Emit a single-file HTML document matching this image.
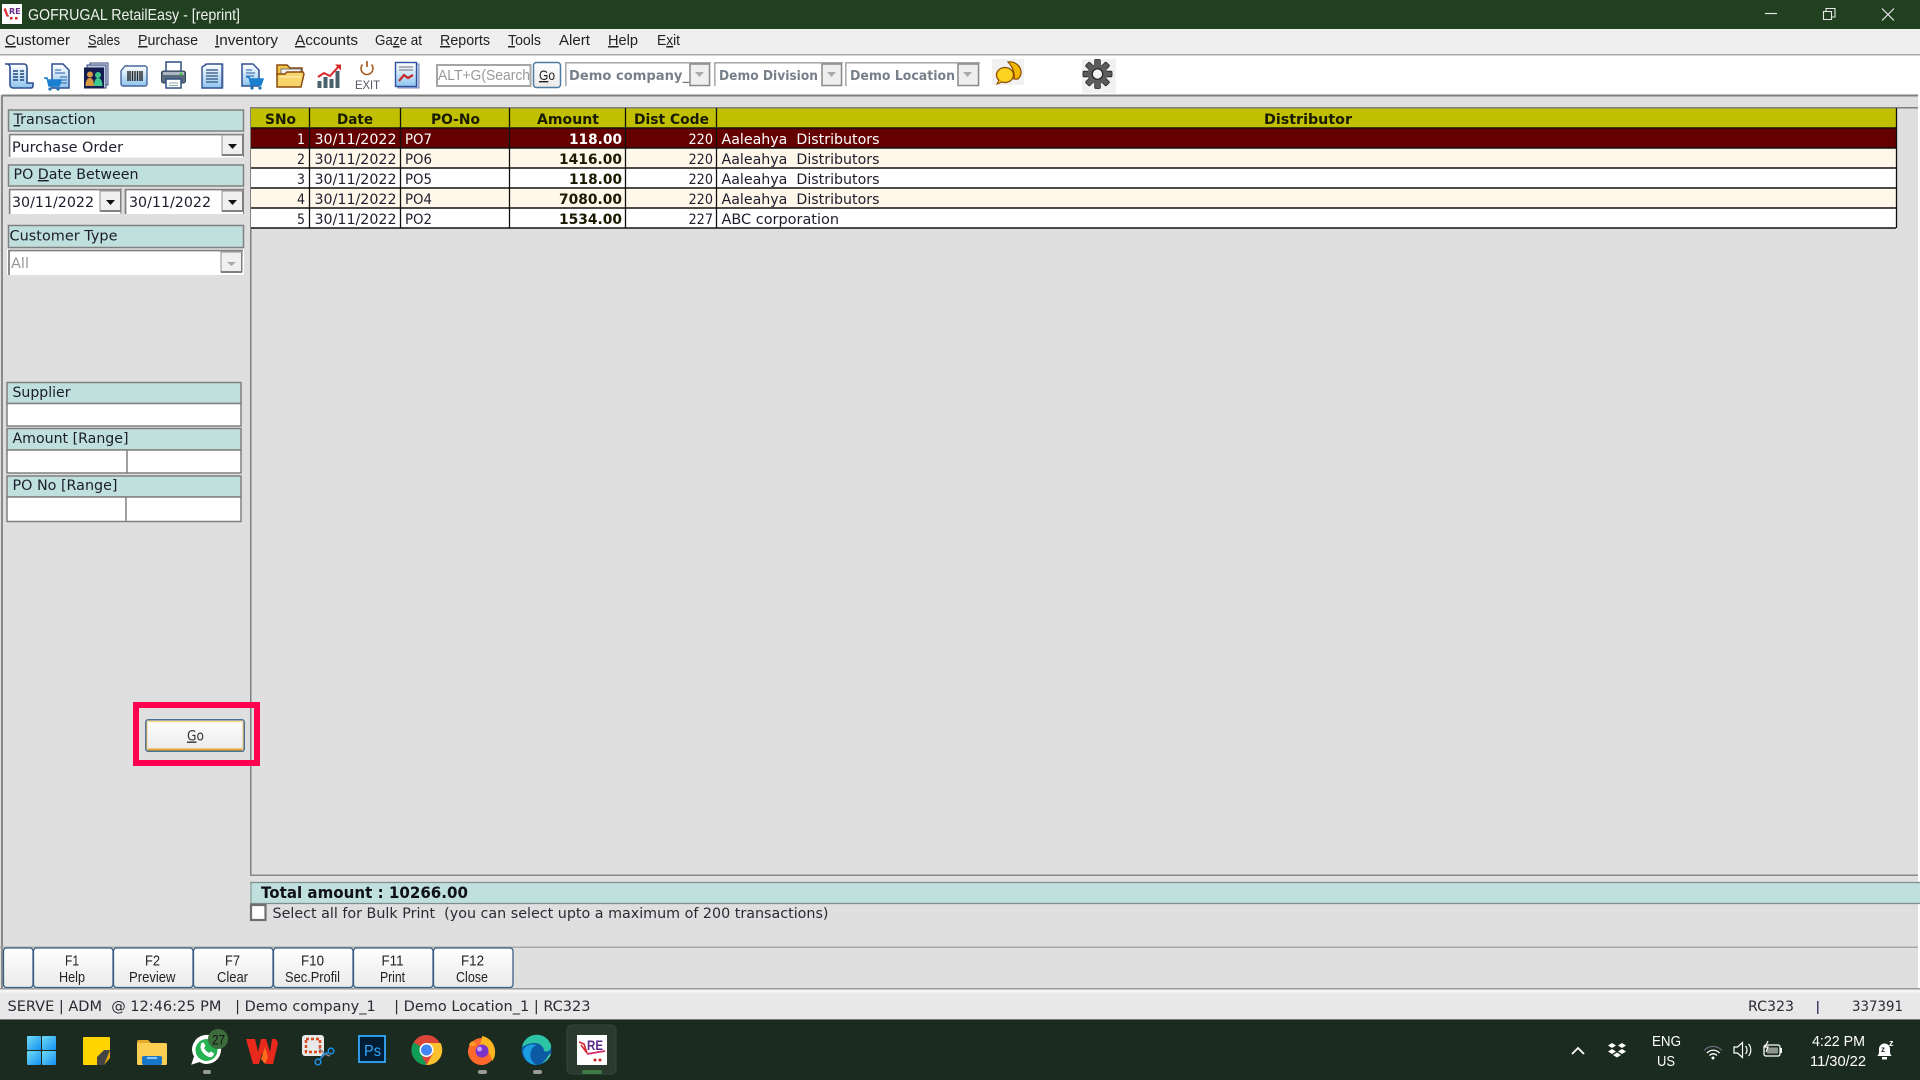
<!DOCTYPE html>
<html><head><meta charset="utf-8"><title>GOFRUGAL RetailEasy - [reprint]</title>
<style>
html,body{margin:0;padding:0;width:1920px;height:1080px;overflow:hidden;background:#dfdfdf}
svg{display:block;position:absolute;left:0;top:0}
text{white-space:pre;font-family:"DejaVu Sans","Liberation Sans",sans-serif;font-size:14px;fill:#1c1c2c}
.m{font-family:"Liberation Sans",sans-serif;font-size:15px;fill:#222}
.b{font-weight:bold;fill:#1a1a00}
.w{fill:#fff}
.f{font-family:"Liberation Sans",sans-serif;font-size:15px;fill:#222}
.t{font-family:"Liberation Sans",sans-serif;font-size:15px;fill:#fff}
.g{font-weight:bold;fill:#77808a;font-size:13.5px}
</style></head><body>
<svg width="1920" height="1080" viewBox="0 0 1920 1080" xmlns="http://www.w3.org/2000/svg">
<defs>
<linearGradient id="btn" x1="0" y1="0" x2="0" y2="1"><stop offset="0" stop-color="#fff"/><stop offset="1" stop-color="#eaeaea"/></linearGradient>
<linearGradient id="blu" x1="0" y1="0" x2="0" y2="1"><stop offset="0" stop-color="#fff"/><stop offset="1" stop-color="#8fc4ee"/></linearGradient>
<linearGradient id="win" x1="0" y1="0" x2="1" y2="1"><stop offset="0" stop-color="#6fdcf7"/><stop offset="1" stop-color="#1590f0"/></linearGradient>
<g id="cart"><path d="M-9 -4h3l2 8h10l2-6h-13" fill="#1a7fd0" stroke="#1a7fd0" stroke-width="1.5"/><rect x="-5" y="-2" width="11" height="6" fill="#1a7fd0"/><circle cx="-3" cy="7" r="1.6" fill="#1a6fb0"/><circle cx="5" cy="7" r="1.6" fill="#1a6fb0"/></g>
<g id="arr"><rect x="0" y="0" width="21" height="20" fill="#f0f0f0" stroke="#909090"/><rect x="20" y="0" width="1.5" height="20" fill="#808080"/><rect x="0" y="19" width="21" height="2" fill="#808080"/></g>
</defs>

<!-- title bar -->
<rect width="1920" height="29" fill="#20401f"/>
<rect x="2" y="4" width="20" height="20" fill="#fff"/>
<path d="M4 9l3 7 2 0 M5 8l3 8" stroke="#d33" stroke-width="1.2" fill="none"/>
<text x="9" y="14" font-size="8" style="font-size:8px;font-weight:bold;fill:#6a2a8a">RE</text>
<rect x="10" y="17" width="2.5" height="2.5" fill="#d22"/><rect x="15" y="17" width="2.5" height="2.5" fill="#d22"/>
<text class="t" x="28" y="20" textLength="212" lengthAdjust="spacingAndGlyphs" style="font-size:16px;fill:#f0f0f0">GOFRUGAL RetailEasy - [reprint]</text>
<path d="M1765 13.5h12" stroke="#e8e8e8" stroke-width="1.2"/>
<path d="M1823.5 11.5h8v8h-8z M1826 11v-2.5h9v8.5h-3" fill="none" stroke="#e8e8e8" stroke-width="1.1"/>
<path d="M1882 8.5l12 12M1894 8.5l-12 12" stroke="#e8e8e8" stroke-width="1.2"/>

<!-- menu bar -->
<rect y="29" width="1920" height="25" fill="#efefef"/>
<rect y="54" width="1920" height="1.5" fill="#a8a8a8"/>
<rect y="55.5" width="1920" height="39.5" fill="#fff"/>
<text class="m" x="5" y="45" textLength="65" lengthAdjust="spacingAndGlyphs"><tspan text-decoration="underline">C</tspan>ustomer</text>
<text class="m" x="88" y="45" textLength="32" lengthAdjust="spacingAndGlyphs"><tspan text-decoration="underline">S</tspan>ales</text>
<text class="m" x="138" y="45" textLength="60" lengthAdjust="spacingAndGlyphs"><tspan text-decoration="underline">P</tspan>urchase</text>
<text class="m" x="215" y="45" textLength="63" lengthAdjust="spacingAndGlyphs"><tspan text-decoration="underline">I</tspan>nventory</text>
<text class="m" x="295" y="45" textLength="63" lengthAdjust="spacingAndGlyphs"><tspan text-decoration="underline">A</tspan>ccounts</text>
<text class="m" x="375" y="45" textLength="47" lengthAdjust="spacingAndGlyphs">Ga<tspan text-decoration="underline">z</tspan>e at</text>
<text class="m" x="440" y="45" textLength="50" lengthAdjust="spacingAndGlyphs"><tspan text-decoration="underline">R</tspan>eports</text>
<text class="m" x="508" y="45" textLength="33" lengthAdjust="spacingAndGlyphs"><tspan text-decoration="underline">T</tspan>ools</text>
<text class="m" x="559" y="45" textLength="31" lengthAdjust="spacingAndGlyphs">Alert</text>
<text class="m" x="608" y="45" textLength="30" lengthAdjust="spacingAndGlyphs"><tspan text-decoration="underline">H</tspan>elp</text>
<text class="m" x="657" y="45" textLength="23" lengthAdjust="spacingAndGlyphs">E<tspan text-decoration="underline">x</tspan>it</text>

<!-- toolbar icons -->
<g transform="translate(3,62)">
<path d="M2 2h19a3 3 0 0 1 3 3v16h6v3a2 2 0 0 1-2 2H10a3 3 0 0 1-3-3V5a3 3 0 0 0-3-3z" fill="url(#blu)" stroke="#2f4f8f" stroke-width="1.6"/>
<path d="M10 9h5M17 9h4M10 12h5M17 12h4M10 15h5M17 15h4M10 18h5M17 18h4" stroke="#23467f" stroke-width="1.6"/></g>
<g transform="translate(44,62)">
<path d="M8 2h11l6 6v18H8z" fill="url(#blu)" stroke="#2f4f8f" stroke-width="1.5"/><path d="M11 8h6M11 11h10M16 15h7M16 18h7M16 21h7" stroke="#4a78b5" stroke-width="1.3"/>
<use href="#cart" transform="translate(9,20)"/></g>
<g transform="translate(83,62)">
<rect x="7" y="1" width="18" height="22" fill="#dfe6ef" stroke="#3a4a80"/><rect x="4" y="3" width="19" height="23" fill="#bcc8dc" stroke="#3a4a80"/><rect x="1" y="5.500" width="20" height="21" fill="#141c50"/>
<circle cx="7" cy="12.500" r="3" fill="#d99a44"/><path d="M2.500 24c0-6 2-8 4.500-8s4 3 4 8z" fill="#d99a44"/><circle cx="15" cy="13" r="3" fill="#3fc88f"/><path d="M11 24c0-6 2-8 4-8s4.500 2 4.500 8z" fill="#3fc88f"/></g>
<g transform="translate(119,62)">
<path d="M6 4h20a2 2 0 0 1 2 2v16a2 2 0 0 1-2 2H4a2 2 0 0 1-2-2V9z" fill="url(#blu)" stroke="#45669c" stroke-width="1.4"/>
<path d="M9 9v10M11 9v10M13.500 9v10M16 9v10M18.500 9v10M21 9v10M23 9v10" stroke="#222" stroke-width="1.400"/></g>
<g transform="translate(160,61)">
<rect x="6" y="1" width="15" height="10" fill="#fff" stroke="#2f4f7f" stroke-width="1.500"/><rect x="1.500" y="10" width="24" height="12" rx="2" fill="#5b6b7d" stroke="#30445f"/><rect x="3" y="11" width="21" height="3" fill="#aab6c2"/><circle cx="21" cy="13" r="1.300" fill="#3c3"/><rect x="6" y="18" width="15" height="9" fill="#fff" stroke="#2f4f7f" stroke-width="1.500"/><path d="M9 22h9M9 24.500h9" stroke="#8aa"/></g>
<g transform="translate(200,62)">
<rect x="5" y="2" width="18" height="24" fill="#cfe0f2" stroke="#7f93b7"/><path d="M2 5l5-3h15v24H2z" fill="url(#blu)" stroke="#2f4f8f" stroke-width="1.400"/><path d="M6 8h12M6 11h12M6 14h12M6 17h12M6 20h12" stroke="#30507f" stroke-width="1.300"/></g>
<g transform="translate(238,62)">
<path d="M4 2h11l6 6v16H4z" fill="url(#blu)" stroke="#2f4f8f" stroke-width="1.500"/><path d="M8 8h6M8 11h9M8 14h8" stroke="#4a78b5" stroke-width="1.300"/>
<use href="#cart" transform="translate(17,19)"/></g>
<g transform="translate(276,63)">
<path d="M1 2h10l3 3h12v7H1z" fill="#f3c648" stroke="#8a4a10" stroke-width="1.500"/><rect x="5" y="6" width="20" height="10" fill="#f4f4f4" stroke="#777"/><path d="M1 24V11h8l2-2h16l1 2-3 13z" fill="#f7d56a" stroke="#8a4a10" stroke-width="1.500"/><path d="M4 14h21" stroke="#fff3c0"/></g>
<g transform="translate(316,62)">
<path d="M1.500 26v-7h4v7zM7.500 26v-11h4v11zM13.500 26v-9h4v9zM19.500 26V9h4v17z" fill="#47606a"/><path d="M2 15l6-4 6 3 9-10" fill="none" stroke="#d8282a" stroke-width="2"/><path d="M19 2.500h6v6z" fill="#d8282a"/></g>
<g transform="translate(367,70)"><path d="M-4.500 -5.500a6 6 0 1 0 9 0" fill="none" stroke="#a85a20" stroke-width="1.500"/><path d="M0 -9v6" stroke="#a85a20" stroke-width="1.700"/></g>
<text x="355" y="89" textLength="25" lengthAdjust="spacingAndGlyphs" style="font-family:'Liberation Sans',sans-serif;font-size:11.500px;fill:#556">EXIT</text>
<g transform="translate(394,62)">
<rect x="4" y="2" width="21" height="24" fill="#c8d4ee" stroke="#7886b8"/><rect x="1.500" y="0.500" width="21" height="24" fill="url(#blu)" stroke="#2d4fa0" stroke-width="1.400"/><path d="M5 5h14M5 8h14" stroke="#8a8a8a" stroke-width="1.300"/><path d="M5 19l5-6 4 3 5-3" fill="none" stroke="#c8282a" stroke-width="2.200"/></g>

<!-- search -->
<rect x="437" y="65" width="93.500" height="21" fill="#fff" stroke="#a5a5a5" stroke-width="2"/>
<text x="438" y="80" textLength="92" lengthAdjust="spacingAndGlyphs" style="font-family:'Liberation Sans',sans-serif;font-size:15px;fill:#999">ALT+G(Search</text>
<rect x="533.500" y="62.500" width="27" height="25" rx="3" fill="url(#btn)" stroke="#4f7a9f" stroke-width="1.500"/>
<text x="539" y="80" textLength="16" lengthAdjust="spacingAndGlyphs" class="m" style="font-size:14px"><tspan text-decoration="underline">G</tspan>o</text>
<!-- combos -->
<g fill="#f4f4f4">
<rect x="565" y="62" width="146" height="24.500"/><rect x="714" y="62" width="129" height="24.500"/><rect x="845" y="62" width="135" height="24.500"/></g>
<path d="M565.800 86V62.800H711M714.800 86V62.800H843M845.800 86V62.800H980" fill="none" stroke="#a8a8a8" stroke-width="1.500"/>
<rect x="567" y="64" width="122" height="22" fill="#fff"/><rect x="716" y="64" width="105" height="22" fill="#fff"/><rect x="847" y="64" width="110" height="22" fill="#fff"/>
<text class="g" x="569" y="80" textLength="120" lengthAdjust="spacingAndGlyphs">Demo company_</text>
<text class="g" x="719" y="80" textLength="99" lengthAdjust="spacingAndGlyphs">Demo Division</text>
<text class="g" x="850" y="80" textLength="105" lengthAdjust="spacingAndGlyphs">Demo Location</text>
<g fill="#efefef" stroke="#8a8a8a" stroke-width="1.500"><rect x="690" y="64" width="19.500" height="21.500"/><rect x="822" y="64" width="19.500" height="21.500"/><rect x="958" y="64" width="20.500" height="21.500"/></g>
<path d="M695 72h9l-4.500 5zM827 72h9l-4.500 5zM963 72h9l-4.500 5z" fill="#aaa"/>
<!-- chat -->
<rect x="992" y="59" width="32" height="26" fill="#f1f1f1"/>
<path d="M1008 62c6-1 12 3 13 9 .5 3-1 6-3 8l-4 0c1-5-1-12-6-17z" fill="#f5b800" stroke="#8a4a00" stroke-width="1.200"/>
<ellipse cx="1005" cy="75" rx="8.500" ry="7.500" fill="#fcd220" stroke="#8a4a00" stroke-width="1.300"/><path d="M999 80l-2 4 5-2" fill="#fcd220" stroke="#8a4a00"/>
<!-- gear -->
<rect x="1082" y="59" width="34" height="34" fill="#f1f1f1"/>
<g transform="translate(1097.500,74)" fill="#5c5c5c" stroke="#222" stroke-width=".8">
<rect x="-2.800" y="-14.500" width="5.600" height="29" rx="1"/><rect x="-2.800" y="-14.500" width="5.600" height="29" rx="1" transform="rotate(45)"/><rect x="-2.800" y="-14.500" width="5.600" height="29" rx="1" transform="rotate(90)"/><rect x="-2.800" y="-14.500" width="5.600" height="29" rx="1" transform="rotate(135)"/>
<circle r="10" stroke="none"/><circle r="5.200" fill="#f4f4f4" stroke="#222" stroke-width="1.200"/></g>

<!-- body frame -->
<rect x="0" y="95" width="1920" height="925" fill="#dfdfdf"/>
<rect x="1918" y="95" width="2" height="895" fill="#fff"/>
<rect x="2" y="94.500" width="1916" height="2" fill="#7f7f7f"/>
<rect x="1" y="95" width="2" height="895" fill="#8a8a8a"/>
<rect x="250" y="107" width="1668" height="1.500" fill="#7f7f7f"/>
<rect x="250" y="107" width="1.500" height="769" fill="#7f7f7f"/>
<rect x="250" y="874.500" width="1668" height="1.500" fill="#8a8a8a"/>

<!-- left panel labels -->
<g fill="#bfe0dd" stroke="#808080" stroke-width="1.500">
<rect x="8.500" y="110" width="235" height="21"/>
<rect x="8.500" y="165" width="235" height="21"/>
<rect x="8.500" y="225.500" width="235" height="22"/>
<rect x="7" y="382.500" width="234" height="21"/>
<rect x="7" y="428.500" width="234" height="21.500"/>
<rect x="7" y="476" width="234" height="21"/></g>
<g fill="#fff" stroke="#808080" stroke-width="1.500">
<rect x="7" y="403.500" width="234" height="22.500"/>
<rect x="7" y="450" width="234" height="23"/>
<rect x="7" y="497" width="234" height="24.500"/></g>
<path d="M127 450v23M126 497v24.500" stroke="#808080" stroke-width="1.500"/>
<text x="13.500" y="124" textLength="82" lengthAdjust="spacingAndGlyphs"><tspan text-decoration="underline">T</tspan>ransaction</text>
<text x="13.500" y="179" textLength="125" lengthAdjust="spacingAndGlyphs">PO <tspan text-decoration="underline">D</tspan>ate Between</text>
<text x="9.500" y="240.500" textLength="108" lengthAdjust="spacingAndGlyphs">Customer Type</text>
<text x="12.500" y="397" textLength="58" lengthAdjust="spacingAndGlyphs">Supplier</text>
<text x="12.500" y="443" textLength="116" lengthAdjust="spacingAndGlyphs">Amount [Range]</text>
<text x="12.500" y="490" textLength="105" lengthAdjust="spacingAndGlyphs">PO No [Range]</text>

<!-- combos left -->
<g fill="#fff">
<rect x="8" y="133" width="236" height="24.500"/><rect x="8" y="188" width="113" height="26"/><rect x="124.500" y="188" width="119.500" height="26"/><rect x="7" y="249" width="237" height="26"/></g>
<path d="M9.500 157V134.500H243.500M9.500 214V189.500H121M125.500 214V189.500H243.500M9 275V250.500H243" fill="none" stroke="#808080" stroke-width="1.800"/>
<path d="M121 188v26M243.500 188v26M243.500 133v24" stroke="#808080" stroke-width="1"/>
<use href="#arr" x="222" y="135"/><use href="#arr" x="100" y="191"/><use href="#arr" x="222" y="191"/><use href="#arr" x="221" y="252"/>
<path d="M228 144h9l-4.500 5zM106 200h9l-4.500 5zM228 200h9l-4.500 5z" fill="#111"/>
<path d="M227 262h9l-4.500 4z" fill="#aaa"/>
<text x="12" y="152" textLength="111" lengthAdjust="spacingAndGlyphs">Purchase Order</text>
<text x="12" y="207" textLength="82" lengthAdjust="spacingAndGlyphs">30/11/2022</text>
<text x="129" y="207" textLength="82" lengthAdjust="spacingAndGlyphs">30/11/2022</text>
<text x="11" y="268" textLength="18" lengthAdjust="spacingAndGlyphs" style="fill:#999">All</text>

<!-- table -->
<rect x="251" y="108.500" width="1645" height="19.500" fill="#c0c000"/>
<rect x="251" y="128" width="1645" height="20" fill="#640000"/>
<rect x="251" y="148" width="1645" height="20" fill="#fff8ea"/>
<rect x="251" y="168" width="1645" height="20" fill="#fff"/>
<rect x="251" y="188" width="1645" height="20" fill="#fff8ea"/>
<rect x="251" y="208" width="1645" height="20" fill="#fff"/>
<path d="M251 128h1645M251 148h1645M251 168h1645M251 188h1645M251 208h1645M251 228h1645" stroke="#111" stroke-width="1.500"/>
<path d="M309.500 108v120M400.500 108v120M509.500 108v120M625.500 108v120M716.500 108v120M1896.500 108v120" stroke="#111" stroke-width="1.300"/>
<text class="b" x="265" y="124" textLength="31" lengthAdjust="spacingAndGlyphs">SNo</text>
<text class="b" x="337" y="124" textLength="36" lengthAdjust="spacingAndGlyphs">Date</text>
<text class="b" x="431" y="124" textLength="49" lengthAdjust="spacingAndGlyphs">PO-No</text>
<text class="b" x="537" y="124" textLength="62" lengthAdjust="spacingAndGlyphs">Amount</text>
<text class="b" x="634" y="124" textLength="75" lengthAdjust="spacingAndGlyphs">Dist Code</text>
<text class="b" x="1264" y="124" textLength="88" lengthAdjust="spacingAndGlyphs">Distributor</text>

<text class="w" x="297" y="144" textLength="8" lengthAdjust="spacingAndGlyphs">1</text>
<text class="w" x="314.500" y="144" textLength="82" lengthAdjust="spacingAndGlyphs">30/11/2022</text>
<text class="w" x="405" y="144" textLength="27" lengthAdjust="spacingAndGlyphs">PO7</text>
<text class="b w" style="fill:#fff" x="569" y="144" textLength="53" lengthAdjust="spacingAndGlyphs">118.00</text>
<text class="w" x="688.500" y="144" textLength="24.500" lengthAdjust="spacingAndGlyphs">220</text>
<text class="w" x="721.500" y="144" textLength="158" lengthAdjust="spacingAndGlyphs">Aaleahya  Distributors</text>

<text x="297" y="164" textLength="8" lengthAdjust="spacingAndGlyphs">2</text>
<text x="314.500" y="164" textLength="82" lengthAdjust="spacingAndGlyphs">30/11/2022</text>
<text x="405" y="164" textLength="27" lengthAdjust="spacingAndGlyphs">PO6</text>
<text class="b" x="559" y="164" textLength="63" lengthAdjust="spacingAndGlyphs">1416.00</text>
<text x="688.500" y="164" textLength="24.500" lengthAdjust="spacingAndGlyphs">220</text>
<text x="721.500" y="164" textLength="158" lengthAdjust="spacingAndGlyphs">Aaleahya  Distributors</text>

<text x="297" y="184" textLength="8" lengthAdjust="spacingAndGlyphs">3</text>
<text x="314.500" y="184" textLength="82" lengthAdjust="spacingAndGlyphs">30/11/2022</text>
<text x="405" y="184" textLength="27" lengthAdjust="spacingAndGlyphs">PO5</text>
<text class="b" x="569" y="184" textLength="53" lengthAdjust="spacingAndGlyphs">118.00</text>
<text x="688.500" y="184" textLength="24.500" lengthAdjust="spacingAndGlyphs">220</text>
<text x="721.500" y="184" textLength="158" lengthAdjust="spacingAndGlyphs">Aaleahya  Distributors</text>

<text x="297" y="204" textLength="8" lengthAdjust="spacingAndGlyphs">4</text>
<text x="314.500" y="204" textLength="82" lengthAdjust="spacingAndGlyphs">30/11/2022</text>
<text x="405" y="204" textLength="27" lengthAdjust="spacingAndGlyphs">PO4</text>
<text class="b" x="559" y="204" textLength="63" lengthAdjust="spacingAndGlyphs">7080.00</text>
<text x="688.500" y="204" textLength="24.500" lengthAdjust="spacingAndGlyphs">220</text>
<text x="721.500" y="204" textLength="158" lengthAdjust="spacingAndGlyphs">Aaleahya  Distributors</text>

<text x="297" y="224" textLength="8" lengthAdjust="spacingAndGlyphs">5</text>
<text x="314.500" y="224" textLength="82" lengthAdjust="spacingAndGlyphs">30/11/2022</text>
<text x="405" y="224" textLength="27" lengthAdjust="spacingAndGlyphs">PO2</text>
<text class="b" x="559" y="224" textLength="63" lengthAdjust="spacingAndGlyphs">1534.00</text>
<text x="688.500" y="224" textLength="24.500" lengthAdjust="spacingAndGlyphs">227</text>
<text x="721.500" y="224" textLength="117.500" lengthAdjust="spacingAndGlyphs">ABC corporation</text>

<!-- Go button with red box -->
<rect x="136" y="705" width="121" height="58" fill="none" stroke="#ff0050" stroke-width="6"/>
<rect x="145.800" y="719.800" width="98.500" height="31.500" rx="2.500" fill="url(#btn)" stroke="#4a7095" stroke-width="1.500"/>
<path d="M147.500 721.500h95" stroke="#fbd98a" stroke-width="1.500"/><path d="M147.500 749.500h95" stroke="#eaa830" stroke-width="2"/>
<path d="M147 722v27M243 722v27" stroke="#f5c566" stroke-width="1"/>
<text x="187" y="740.500" textLength="17" lengthAdjust="spacingAndGlyphs" style="font-size:14px;fill:#333"><tspan text-decoration="underline">G</tspan>o</text>

<!-- total -->
<rect x="250" y="882" width="1670" height="21.500" fill="#bfe0dd"/>
<path d="M250 882.500h1670M250 903.500h1670" stroke="#7f8f8f" stroke-width="1.300"/>
<rect x="250.500" y="882" width="1" height="22" fill="#7f8f8f"/>
<text class="b" style="fill:#101018;font-size:16px" x="261" y="898" textLength="207" lengthAdjust="spacingAndGlyphs">Total amount : 10266.00</text>
<rect x="251" y="905" width="14.500" height="15" fill="#fff" stroke="#6f6f6f" stroke-width="2.200"/>
<text x="272.500" y="918" textLength="556" lengthAdjust="spacingAndGlyphs" style="fill:#2a2a35">Select all for Bulk Print  (you can select upto a maximum of 200 transactions)</text>

<!-- function buttons -->
<rect x="0" y="946.500" width="1918" height="1.500" fill="#a8a8a8"/>
<g fill="url(#btn)" stroke="#3a5f85" stroke-width="1.300">
<rect x="3.500" y="948" width="29.500" height="39.500" rx="3"/>
<rect x="33.500" y="948" width="79.500" height="39.500" rx="3"/>
<rect x="113.500" y="948" width="79.500" height="39.500" rx="3"/>
<rect x="193.500" y="948" width="79.500" height="39.500" rx="3"/>
<rect x="273.500" y="948" width="79.500" height="39.500" rx="3"/>
<rect x="353.500" y="948" width="79.500" height="39.500" rx="3"/>
<rect x="433.500" y="948" width="79.500" height="39.500" rx="3"/></g>
<text class="f" x="65" y="965.500" textLength="14" lengthAdjust="spacingAndGlyphs">F1</text>
<text class="f" x="59" y="982" textLength="26" lengthAdjust="spacingAndGlyphs">Help</text>
<text class="f" x="145" y="965.500" textLength="15" lengthAdjust="spacingAndGlyphs">F2</text>
<text class="f" x="129" y="982" textLength="46.500" lengthAdjust="spacingAndGlyphs">Preview</text>
<text class="f" x="225" y="965.500" textLength="15" lengthAdjust="spacingAndGlyphs">F7</text>
<text class="f" x="217" y="982" textLength="31" lengthAdjust="spacingAndGlyphs">Clear</text>
<text class="f" x="301" y="965.500" textLength="23" lengthAdjust="spacingAndGlyphs">F10</text>
<text class="f" x="285" y="982" textLength="55" lengthAdjust="spacingAndGlyphs">Sec.Profil</text>
<text class="f" x="381.500" y="965.500" textLength="22" lengthAdjust="spacingAndGlyphs">F11</text>
<text class="f" x="380" y="982" textLength="25" lengthAdjust="spacingAndGlyphs">Print</text>
<text class="f" x="461" y="965.500" textLength="23" lengthAdjust="spacingAndGlyphs">F12</text>
<text class="f" x="456" y="982" textLength="32" lengthAdjust="spacingAndGlyphs">Close</text>

<!-- status -->
<rect y="988" width="1920" height="1.500" fill="#9a9a9a"/>
<rect y="989.500" width="1920" height="3" fill="#f6f6f6"/>
<rect y="992.500" width="1920" height="27.500" fill="#e8e8e8"/>
<rect y="1019" width="1920" height="1" fill="#777"/>
<text x="7.500" y="1011" textLength="583" lengthAdjust="spacingAndGlyphs" style="fill:#2a2a35">SERVE | ADM  @ 12:46:25 PM   | Demo company_1    | Demo Location_1 | RC323</text>
<text x="1748" y="1011" textLength="46" lengthAdjust="spacingAndGlyphs" style="fill:#2a2a35">RC323</text>
<rect x="1817" y="1001" width="1.500" height="13" fill="#4a3a6a"/>
<text x="1852" y="1011" textLength="51" lengthAdjust="spacingAndGlyphs" style="fill:#2a2a35">337391</text>

<!-- taskbar -->
<rect y="1020" width="1920" height="60" fill="#1b2b20"/>
<rect x="567" y="1025" width="49" height="49" rx="5" fill="#2a3a2e" stroke="#34443a"/>
<rect x="582" y="1070" width="20" height="4" rx="2" fill="#3f7a45"/>
<rect x="203" y="1070" width="8" height="4" rx="2" fill="#9a9a9a"/><rect x="478" y="1070" width="9" height="4" rx="2" fill="#9a9a9a"/><rect x="533" y="1070" width="9" height="4" rx="2" fill="#9a9a9a"/>
<!-- start -->
<g fill="url(#win)"><rect x="27" y="1036" width="14" height="14" rx="1"/><rect x="42" y="1036" width="14" height="14" rx="1"/><rect x="27" y="1051" width="14" height="14" rx="1"/><rect x="42" y="1051" width="14" height="14" rx="1"/></g>
<!-- sticky -->
<path d="M84 1037h25a1 1 0 0 1 1 1v18l-9 9H84a1 1 0 0 1-1-1v-26a1 1 0 0 1 1-1z" fill="#ffd400"/><path d="M110 1050v8l-6 7h-7v-8l7-7z" fill="#444"/><path d="M104 1065l6-7v-8" fill="#e3a80a"/>
<!-- folder -->
<path d="M137 1042a2 2 0 0 1 2-2h9l3 3h15v4h-29z" fill="#e5a92c"/><rect x="137" y="1043" width="30" height="22" rx="1.500" fill="#fbcf52"/><rect x="142" y="1056" width="20" height="9" rx="2" fill="#1a76c8"/><rect x="147" y="1057" width="10" height="2" fill="#8cc8f4"/>
<!-- whatsapp -->
<path d="M192 1064l2.500-7.500a14 14 0 1 1 5 5z" fill="#fff" stroke="#fff" stroke-width="1"/>
<circle cx="206.500" cy="1050" r="11" fill="#25b252"/>
<path d="M201 1044c1-2 3-2 3.500 0l1 2-1.500 2c1 2 3 4 5 5l2-1.500 2.500 1.500c1 1 0 3-2 4-5 1-11-6-11-10z" fill="#fff"/>
<circle cx="218" cy="1039" r="10" fill="#3c6b3c"/><text x="212" y="1044.500" textLength="13" lengthAdjust="spacingAndGlyphs" style="font-family:'Liberation Sans',sans-serif;font-size:14px;fill:#111">27</text>
<!-- wps -->
<path d="M247 1040h9l3 13 3-13h5l4 13 2-13h4l2 4-5 21h-7l-4-11-3 11h-6z" transform="translate(-1,-1)" fill="#e8291c"/><path d="M262 1060l4-12 3 10-3 7z" transform="translate(-1,-1)" fill="#ff6a1c"/>
<!-- snip -->
<rect x="302" y="1035" width="22" height="21" rx="3" fill="#e9e9e9"/><rect x="306" y="1039" width="14" height="13" fill="none" stroke="#d84a20" stroke-width="2.500" stroke-dasharray="3 2"/>
<path d="M319 1048l6 6 5 2M325 1054l-3 3" stroke="#888" stroke-width="1.500" fill="none"/>
<circle cx="331" cy="1051" r="2.800" fill="none" stroke="#1d8fe1" stroke-width="1.600"/><circle cx="318" cy="1062" r="2.800" fill="none" stroke="#1d8fe1" stroke-width="1.600"/><path d="M328 1052.500l-5 2-3 5" stroke="#1d8fe1" stroke-width="1.600" fill="none"/>
<!-- ps -->
<rect x="359" y="1036" width="26" height="26" fill="#001d34" stroke="#31a8ff" stroke-width="1.800"/>
<text x="364" y="1056" textLength="17" lengthAdjust="spacingAndGlyphs" style="font-family:'Liberation Sans',sans-serif;font-size:16px;fill:#31a8ff">Ps</text>
<!-- chrome -->
<circle cx="426.500" cy="1050" r="15" fill="#db4437"/>
<path d="M426.500 1050L413.500 1042.500A15 15 0 0 0 419 1063z" fill="#0f9d58"/><path d="M413.500 1042.500L426.500 1050 419 1063A15 15 0 0 0 426.500 1065 15 15 0 0 0 412 1054z" fill="#109d58"/>
<path d="M426.500 1043H440.500A15 15 0 0 1 426.500 1065L433 1053.500z" fill="#fbc02d"/>
<circle cx="426.500" cy="1050" r="7" fill="#fff"/><circle cx="426.500" cy="1050" r="5.500" fill="#4285f4"/>
<!-- firefox -->
<circle cx="481.500" cy="1051.500" r="13.500" fill="#ff6a2c"/><path d="M482 1036c6 1 12 6 13 14 .5 6-1 9-3 11-2-9-7-14-12-16 1-3 2-6 2-9z" fill="#ffb51f"/><path d="M469 1045c1-3 3-4 5-4 0 2 2 3 3 3-3 2-5 3-8 1z" fill="#ff9a2a"/><circle cx="482" cy="1051" r="6.500" fill="#7a32c8"/><circle cx="479.500" cy="1049" r="2.500" fill="#c8a0ff"/>
<!-- edge -->
<circle cx="536.500" cy="1050" r="15" fill="#0c59a4"/>
<path d="M522 1047a15 15 0 0 1 29-2c1 5-4 8-7 6 0-4-4-8-9-8-6 0-9 2-13 4z" fill="#2cc4a4"/>
<path d="M523 1052c1 8 7 13 14 13-5-2-8-8-6-14 1-3 3-5 6-6-8-2-14 2-14 7z" fill="#1b9de2"/>
<path d="M551 1053c-1 5-5 9-10 10 3-1 6-4 7-7z" fill="#50e0a0"/>
<!-- RE -->
<rect x="577" y="1035" width="30" height="30" fill="#fff"/>
<path d="M579 1042l5 2 3 9M581 1045l6 8" stroke="#d62a30" stroke-width="1.600" fill="none"/>
<text x="587" y="1050" textLength="16" lengthAdjust="spacingAndGlyphs" style="font-family:'Liberation Sans',sans-serif;font-size:14px;font-weight:bold;fill:#5b2a8a">RE</text>
<path d="M587 1054l18-3" stroke="#d62a6a" stroke-width="1.800"/>
<circle cx="595" cy="1060" r="1.500" fill="#c22"/><circle cx="600" cy="1060" r="1.500" fill="#c22"/>

<!-- tray -->
<path d="M1572 1054l6-6 6 6" fill="none" stroke="#fff" stroke-width="1.800"/>
<path d="M1612 1043l4 2.500-4 2.500-4-2.500zM1622 1043l-4 2.500 4 2.500 4-2.500zM1612 1049l4 2.500-4 2.500-4-2.500zM1622 1049l-4 2.500 4 2.500 4-2.500zM1617 1052.500l4 2.500-4 2.500-4-2.500z" fill="#fff"/>
<text class="t" x="1652" y="1046" textLength="29" lengthAdjust="spacingAndGlyphs">ENG</text>
<text class="t" x="1657" y="1066" textLength="18" lengthAdjust="spacingAndGlyphs">US</text>
<g fill="none" stroke="#fff" stroke-width="1.300"><path d="M1704 1050.500a12 12 0 0 1 18 0" stroke="#667"/><path d="M1707 1053a8.500 8.500 0 0 1 12.500 0"/><path d="M1709.500 1055.500a5 5 0 0 1 7.500 0"/></g><circle cx="1713" cy="1058" r="1.500" fill="#fff"/>
<path d="M1734 1047h3.500l5-4.500v15l-5-4.500h-3.500z" fill="none" stroke="#fff" stroke-width="1.200"/><path d="M1745.500 1046c2 2 2 6 0 8M1748.500 1044c3 3 3 9 0 12" fill="none" stroke="#fff" stroke-width="1.200"/>
<rect x="1764" y="1045" width="16" height="11" rx="2" fill="#1b2b20" stroke="#fff" stroke-width="1.300"/><rect x="1780" y="1048" width="2" height="5" fill="#fff"/><rect x="1767" y="1047.500" width="11" height="6" fill="#fff" opacity=".5"/><path d="M1768 1041l-3 6h3l-2 5" stroke="#fff" stroke-width="1.200" fill="none"/>
<text class="t" x="1812" y="1046" textLength="53" lengthAdjust="spacingAndGlyphs">4:22 PM</text>
<text class="t" x="1810" y="1066" textLength="56" lengthAdjust="spacingAndGlyphs">11/30/22</text>
<path d="M1877 1056c2-1 2-3 2-7a5.500 5.500 0 0 1 11 0c0 4 0 6 2 7z" fill="#fff"/><rect x="1882" y="1057" width="5" height="2.500" fill="#fff"/>
<text x="1881" y="1052" style="font-family:'Liberation Sans',sans-serif;font-size:8px;font-weight:bold;fill:#1b2b20">z</text>
<text x="1889" y="1046" style="font-family:'Liberation Sans',sans-serif;font-size:9px;font-weight:bold;fill:#fff">z</text>
</svg>
</body></html>
